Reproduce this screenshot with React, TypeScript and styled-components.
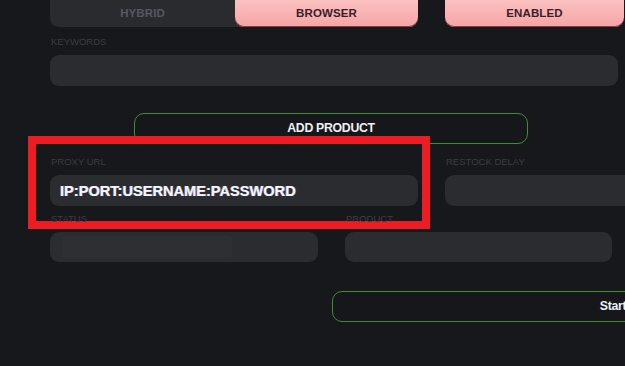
import React from "react";
import styled, { createGlobalStyle } from "styled-components";

const Global = createGlobalStyle`
  html, body {
    margin: 0;
    padding: 0;
    background: #17181b;
    overflow: hidden;
    width: 625px;
    height: 366px;
  }
  * { box-sizing: border-box; }
`;

const Page = styled.div`
  width: 625px;
  height: 366px;
  overflow: hidden;
  background: #17181b;
  font-family: "Liberation Sans", Arial, sans-serif;
`;

const Form = styled.div`
  display: flex;
  flex-direction: column;
  align-items: flex-start;
  padding-left: 50px;
  margin-top: -8px;
  width: 1000px;
`;

const Row = styled.div<{ $mt?: number; $gap?: number }>`
  display: flex;
  gap: ${(p) => p.$gap ?? 27}px;
  margin-top: ${(p) => p.$mt ?? 0}px;
  flex-shrink: 0;
`;

const Segmented = styled.div<{ $w: number }>`
  display: flex;
  width: ${(p) => p.$w}px;
  height: 35px;
  border-radius: 9px;
  background: #2a2b2f;
`;

const Segment = styled.div<{ $active?: boolean; $w: number }>`
  width: ${(p) => p.$w}px;
  height: 100%;
  display: flex;
  align-items: center;
  justify-content: center;
  padding-top: 6px;
  border-radius: 9px;
  font-size: 11.5px;
  font-weight: 700;
  letter-spacing: 0.1px;
  color: ${(p) => (p.$active ? "#3a1d27" : "#565962")};
  background: ${(p) =>
    p.$active ? "linear-gradient(#fcc9c9, #f6a4a5)" : "transparent"};
  box-shadow: ${(p) => (p.$active ? "inset 0 -1px 0 #8a3c45" : "none")};
`;

const Field = styled.div<{ $w: number }>`
  position: relative;
  width: ${(p) => p.$w}px;
  display: flex;
  flex-direction: column;
`;

const Label = styled.div`
  height: 12px;
  line-height: 12px;
  margin-bottom: 7px;
  padding-left: 1px;
  font-size: 9.5px;
  color: #3b3d42;
  text-transform: uppercase;
  white-space: nowrap;
`;

const Input = styled.div<{ $h?: number }>`
  height: ${(p) => p.$h ?? 31}px;
  border-radius: 9px;
  background: #2b2c30;
  display: flex;
  align-items: center;
  padding-left: 10px;
  overflow: hidden;
`;

const Value = styled.span`
  font-size: 14.6px;
  font-weight: 700;
  color: #f4f6fb;
  white-space: nowrap;
  text-shadow: -0.6px 0 0 rgba(120, 170, 255, 0.7), 0.6px 0 0 rgba(255, 170, 120, 0.6);
`;

const Placeholder = styled.span`
  width: 170px;
  height: 22px;
  margin-left: 2px;
  border-radius: 3px;
  background: #2e2f33;
`;

const OutlineButton = styled.div<{ $ml: number; $w: number; $mt: number }>`
  margin-left: ${(p) => p.$ml}px;
  margin-top: ${(p) => p.$mt}px;
  width: ${(p) => p.$w}px;
  height: 31px;
  flex-shrink: 0;
  border: 1.5px solid #3f8c35;
  border-radius: 10px;
  background: #16171a;
  display: flex;
  align-items: center;
  justify-content: center;
  padding-bottom: 2px;
  font-size: 12.3px;
  font-weight: 700;
  color: #eef0f4;
  letter-spacing: -0.3px;
  white-space: nowrap;
`;

const Highlight = styled.div`
  position: absolute;
  left: -22px;
  top: -20px;
  width: 402px;
  height: 93px;
  border: 8px solid #ed1c24;
  pointer-events: none;
`;

export default function App() {
  return (
    <Page>
      <Global />
      <Form>
        <Row>
          <Segmented $w={368}>
            <Segment $w={185}>HYBRID</Segment>
            <Segment $w={183} $active>
              BROWSER
            </Segment>
          </Segmented>
          <Segmented $w={179}>
            <Segment $w={179} $active>
              ENABLED
            </Segment>
          </Segmented>
        </Row>

        <Row $mt={9}>
          <Field $w={568}>
            <Label>Keywords</Label>
            <Input />
          </Field>
        </Row>

        <OutlineButton $ml={84} $w={394} $mt={27}>
          ADD PRODUCT
        </OutlineButton>

        <Row $mt={12}>
          <Field $w={368}>
            <Label>Proxy URL</Label>
            <Input>
              <Value>IP:PORT:USERNAME:PASSWORD</Value>
            </Input>
            <Highlight />
          </Field>
          <Field $w={368}>
            <Label>Restock Delay</Label>
            <Input />
          </Field>
        </Row>

        <Row $mt={7}>
          <Field $w={268}>
            <Label>Status</Label>
            <Input $h={30}>
              <Placeholder />
            </Input>
          </Field>
          <Field $w={267}>
            <Label>Product</Label>
            <Input $h={30} />
          </Field>
        </Row>

        <OutlineButton $ml={282} $w={562} $mt={29}>
          Start
        </OutlineButton>
      </Form>
    </Page>
  );
}
